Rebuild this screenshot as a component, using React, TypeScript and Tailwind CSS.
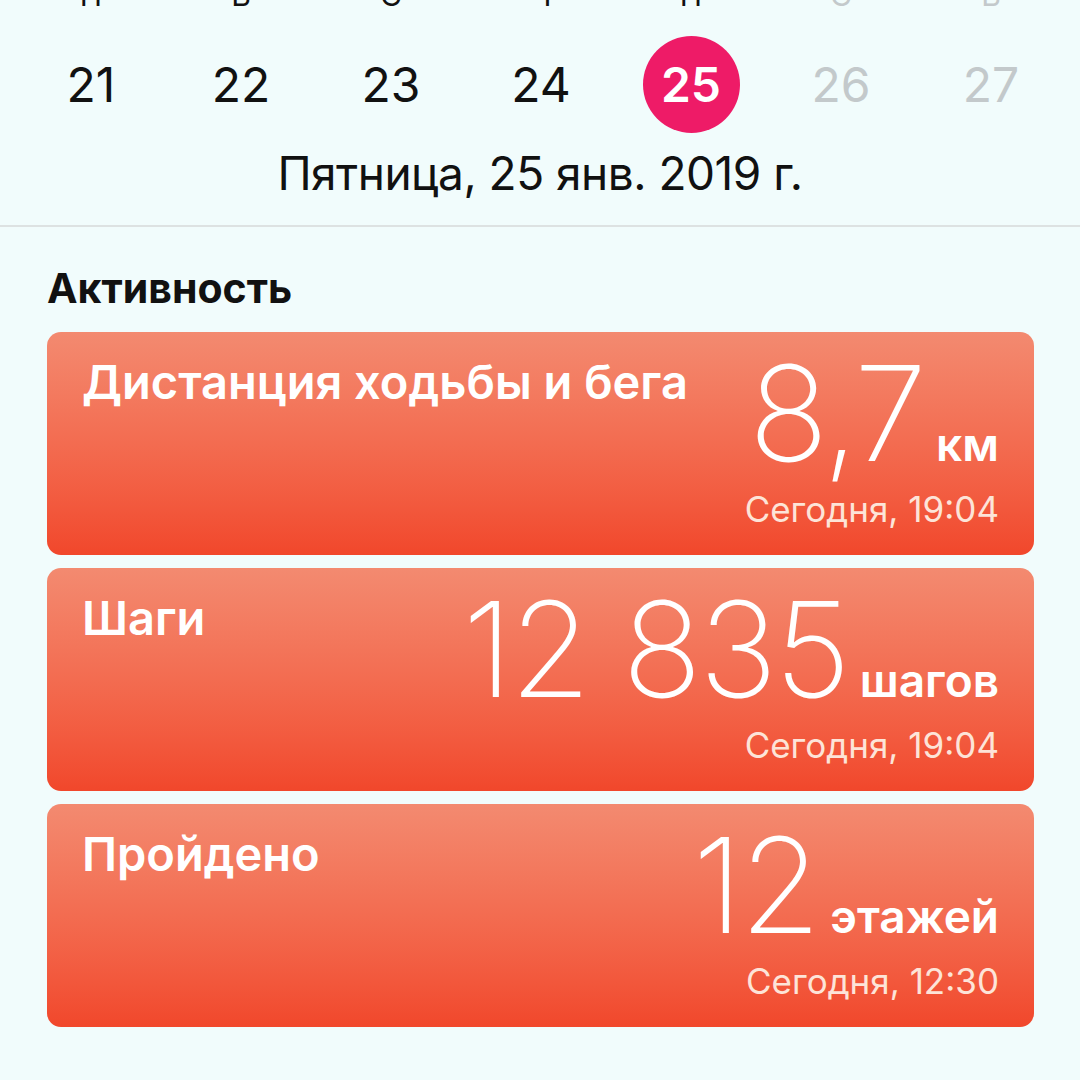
import React from "react";

const days = [
  { d: "21", l: "П", muted: false, sel: false },
  { d: "22", l: "В", muted: false, sel: false },
  { d: "23", l: "С", muted: false, sel: false },
  { d: "24", l: "Ч", muted: false, sel: false },
  { d: "25", l: "П", muted: false, sel: true },
  { d: "26", l: "С", muted: true, sel: false },
  { d: "27", l: "В", muted: true, sel: false },
];

const cards = [
  { title: "Дистанция ходьбы и бега", value: "8,7", unit: "км", time: "Сегодня, 19:04" },
  { title: "Шаги", value: "12 835", unit: "шагов", time: "Сегодня, 19:04" },
  { title: "Пройдено", value: "12", unit: "этажей", time: "Сегодня, 12:30" },
];

export default function App() {
  return (
    <div
      className="w-[1080px] h-[1080px] overflow-hidden bg-[#f1fcfc] text-[#111]"
      style={{ fontFamily: "Inter, 'Noto Sans', sans-serif" }}
    >
      <div className="border-b-2 border-[#dde2e2] pb-[29px]">
        <div className="grid grid-cols-7 pl-[16px] pr-[14px] -mt-[20px] text-[30px] leading-[30px]">
          {days.map((x, i) => (
            <div key={i} className={`text-center ${x.muted ? "text-[#c3c9cb]" : "text-[#111]"}`}>
              {x.l}
            </div>
          ))}
        </div>
        <div className="grid grid-cols-7 pl-[16px] pr-[14px] mt-[26px]">
          {days.map((x, i) => (
            <div key={i} className="flex justify-center">
              <div
                className={`w-[97px] h-[97px] rounded-full flex items-center justify-center text-[48px] leading-none ${
                  x.sel
                    ? "bg-[#ee1b67] text-white font-semibold"
                    : x.muted
                    ? "text-[#c3c9cb]"
                    : "text-[#111]"
                }`}
              >
                {x.d}
              </div>
            </div>
          ))}
        </div>
        <div className="mt-[17px] text-center text-[46px] leading-[46px] tracking-[-0.5px]">
          Пятница, 25 янв. 2019 г.
        </div>
      </div>

      <div className="pl-[47px] pr-[46px]">
        <div className="mt-[41px] text-[41px] leading-[40px] font-bold text-[#111]">Активность</div>
        <div className="mt-[24px] flex flex-col gap-[13px]">
          {cards.map((c, i) => (
            <div
              key={i}
              className="h-[223px] rounded-[14px] bg-gradient-to-b from-[#f38a70] to-[#f1472b] flex justify-between px-[35px] text-white"
            >
              <div className="pt-[27px] text-[47px] leading-[46px] font-semibold">{c.title}</div>
              <div className="pt-[15px] flex flex-col items-end">
                <div className="flex items-baseline">
                  <span className="text-[132px] leading-[132px] font-extralight tracking-[-3px]">
                    {c.value}
                  </span>
                  <span className="ml-[12px] text-[46px] font-semibold">{c.unit}</span>
                </div>
                <div className="mt-[12px] text-[35px] leading-[36px] text-[#fde4d8]">{c.time}</div>
              </div>
            </div>
          ))}
        </div>
      </div>
    </div>
  );
}
